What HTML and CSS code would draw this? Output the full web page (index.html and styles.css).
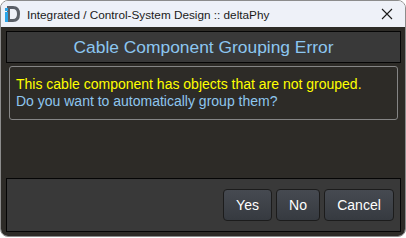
FILE: index.html
```html
<!DOCTYPE html>
<html>
<head>
<meta charset="utf-8">
<link rel="stylesheet" href="styles.css">
</head>
<body>
<div class="window">
  <div class="titlebar">
    <svg class="app-icon" width="16" height="18" viewBox="0 0 16 18">
      <path d="M2 1 H8 Q15 1 15 9 Q15 17 8 17 H2 Z M5 4 V14 H8 Q12 14 12 9 Q12 4 8 4 Z" fill="#5b6068" fill-rule="evenodd"/>
      <rect x="0" y="3" width="3" height="3" fill="#2aa4e8"/>
      <rect x="0" y="7" width="3" height="10" fill="#2aa4e8"/>
    </svg>
    <span class="title">Integrated / Control-System Design :: deltaPhy</span>
    <svg class="close" width="12" height="12" viewBox="0 0 12 12">
      <path d="M1 1 L11 11 M11 1 L1 11" stroke="#1a1a1a" stroke-width="1.1"/>
    </svg>
  </div>
  <div class="content">
    <div class="header">Cable Component Grouping Error</div>
    <div class="message">
      <div class="line-warn">This cable component has objects that are not grouped.</div>
      <div class="line-ask">Do you want to automatically group them?</div>
    </div>
    <div class="buttonbar">
      <button class="btn btn-yes">Yes</button>
      <button class="btn btn-no">No</button>
      <button class="btn btn-cancel">Cancel</button>
    </div>
  </div>
</div>
</body>
</html>
```
FILE: styles.css
```css
html, body {
  margin: 0;
  padding: 0;
  background: #ffffff;
}
.window {
  width: 406px;
  height: 237px;
  box-sizing: border-box;
  border: 1px solid #8c8c8c;
  border-radius: 8px;
  overflow: hidden;
  display: flex;
  flex-direction: column;
  font-family: "Liberation Sans", Arial, sans-serif;
}
.titlebar {
  height: 26px;
  flex: none;
  background: #eef1f8;
  display: flex;
  align-items: center;
  padding-left: 4px;
  padding-right: 12px;
}
.app-icon {
  flex: none;
  margin-right: 6px;
}
.title {
  flex: 1;
  font-family: "Liberation Sans", Arial, sans-serif;
  font-size: 11.75px;
  color: #1a1a1a;
  white-space: nowrap;
}
.close {
  flex: none;
}
.content {
  flex: 1;
  background: #2d2b27;
  display: flex;
  flex-direction: column;
  padding: 4px 4px 4px 5px;
}
.header {
  height: 30px;
  flex: none;
  background: #393939;
  border: 1px solid #050505;
  color: #8cc6f0;
  font-size: 17.4px;
  display: flex;
  align-items: center;
  justify-content: center;
}
.message {
  margin: 3px 3px 0 3px;
  height: 52px;
  border: 1px solid #858585;
  border-radius: 3px;
  padding: 0 6px;
  display: flex;
  flex-direction: column;
  justify-content: center;
  font-size: 14px;
  line-height: 17px;
}
.line-warn {
  color: #ffff00;
}
.line-ask {
  color: #8ec6ee;
}
.buttonbar {
  margin-top: auto;
  height: 42px;
  flex: none;
  background: #393939;
  border: 1px solid #050505;
  display: flex;
  justify-content: flex-end;
  align-items: flex-start;
  gap: 4px;
  padding: 10px 6px 0 0;
}
.btn {
  height: 32px;
  box-sizing: border-box;
  border: 1px solid #1c1c1c;
  border-radius: 4px;
  background: linear-gradient(#464a51, #363a40);
  color: #ffffff;
  font-family: "Liberation Sans", Arial, sans-serif;
  font-size: 14px;
  padding: 0;
}
.btn-yes { width: 49px; }
.btn-no { width: 44px; }
.btn-cancel { width: 70px; }
```
